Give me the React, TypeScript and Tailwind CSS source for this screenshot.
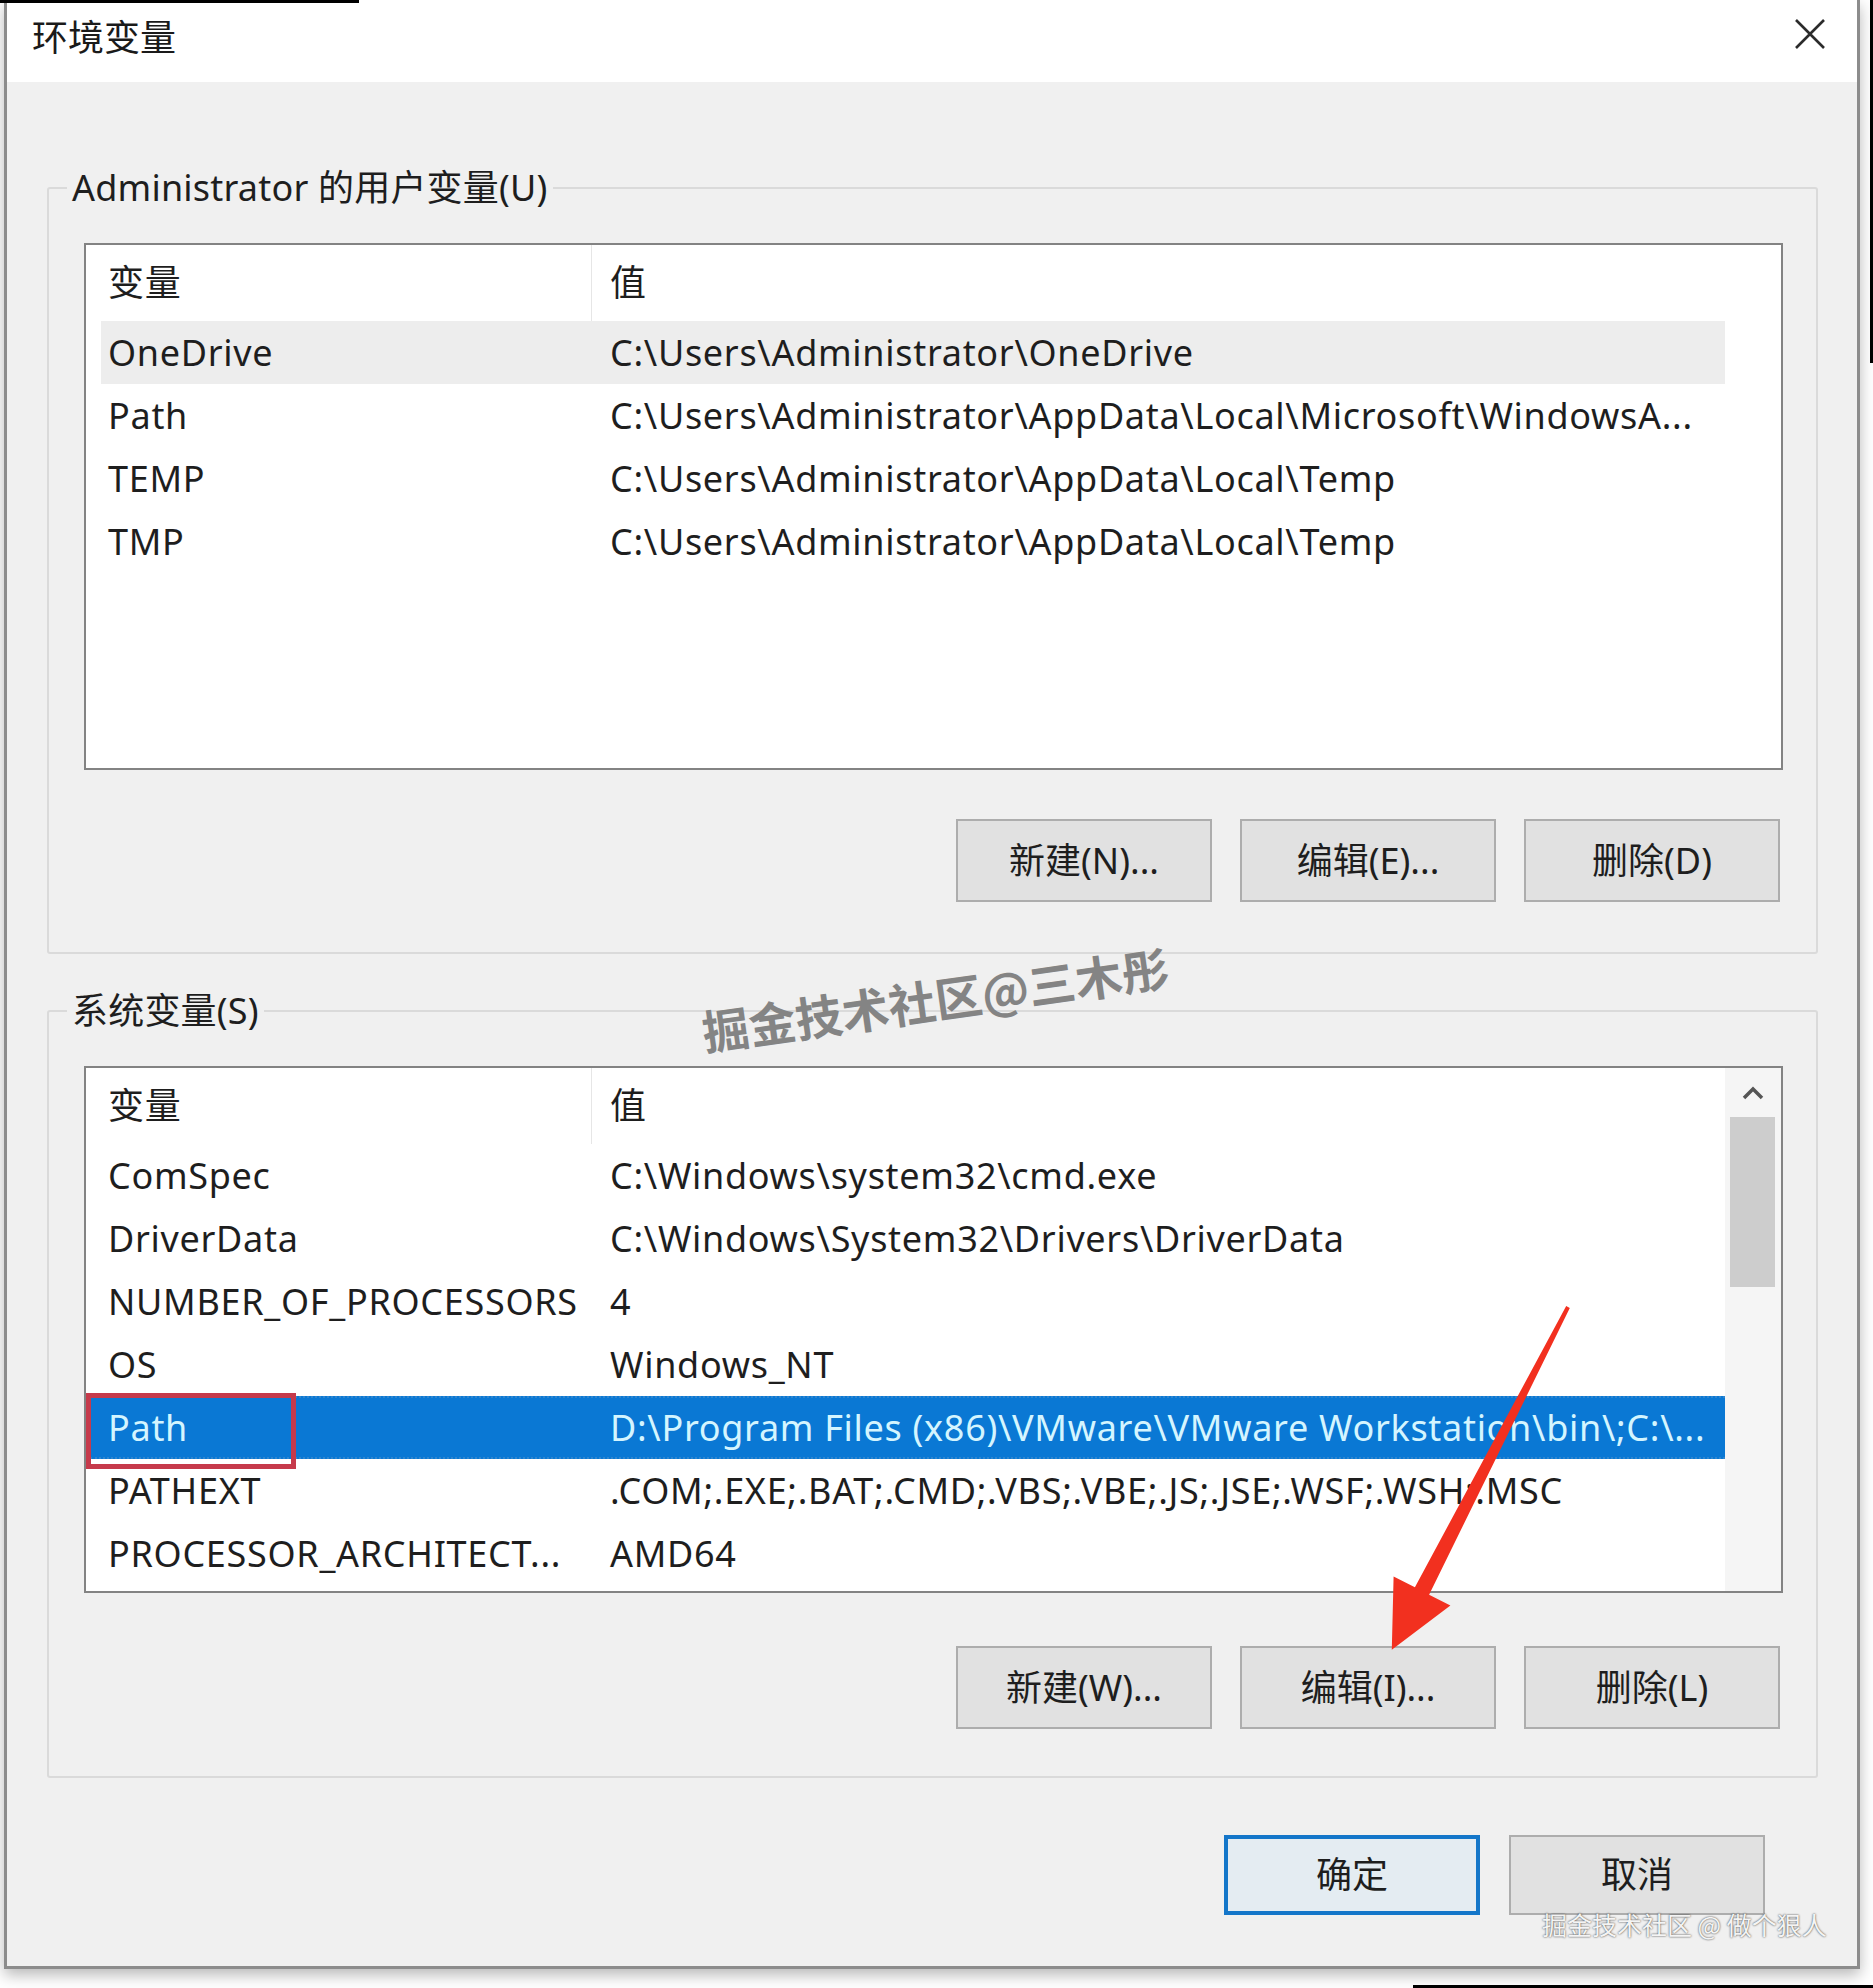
import React from "react";

type RowProps = {
  name: string;
  value: string;
  selected?: boolean;
  hover?: boolean;
  boxed?: boolean;
};

function Row({ name, value, selected, hover, boxed }: RowProps) {
  const bg = selected
    ? "bg-[#0a78d4] text-[#d4f5ff] border-y-2 border-dotted border-[#2f86cf]"
    : hover
    ? "ml-[11px] bg-[#ededed] text-[#1e1e1e]"
    : "text-[#1e1e1e]";
  return (
    <div className={`relative flex h-[63px] items-center ${bg}`}>
      <div
        className={`shrink-0 overflow-hidden whitespace-nowrap ${
          hover ? "w-[490px] pl-[7px]" : "w-[501px] pl-[18px]"
        }`}
      >
        {name}
      </div>
      <div className="flex-1 overflow-hidden whitespace-nowrap pl-[19px]">{value}</div>
      {boxed && (
        <div className="absolute left-[-4px] top-[-5px] h-[76px] w-[210px] border-[5px] border-[#c63a4b]" />
      )}
    </div>
  );
}

function ListBox({ children, scroll }: { children: React.ReactNode; scroll?: boolean }) {
  return (
    <div className="flex h-[527px] border-2 border-[#838383] bg-white">
      <div className="w-[1639px] shrink-0 pl-[4px]">
        <div className="flex h-[76px] items-stretch text-[#1e1e1e]">
          <div className="flex w-[501px] shrink-0 items-center pl-[18px]">变量</div>
          <div className="flex flex-1 items-center border-l border-[#e6e6e6] pl-[18px]">值</div>
        </div>
        {children}
      </div>
      {scroll ? (
        <div className="flex flex-1 flex-col bg-[#f5f5f5]">
          <div className="flex h-[49px] items-center justify-center">
            <svg width="22" height="14" viewBox="0 0 22 14">
              <path d="M2 12 L11 3 L20 12" fill="none" stroke="#555" strokeWidth="3.5" />
            </svg>
          </div>
          <div className="ml-[5px] h-[170px] w-[45px] bg-[#cdcdcd]" />
        </div>
      ) : (
        <div className="flex-1" />
      )}
    </div>
  );
}

function Btn({ children, primary, h = "h-[83px]" }: { children: React.ReactNode; primary?: boolean; h?: string }) {
  return (
    <div
      className={`flex w-[256px] items-center justify-center leading-none text-[#1e1e1e] ${h} ${
        primary ? "border-[4px] border-[#1476c9] bg-[#e4ecf2]" : "border-2 border-[#adadad] bg-[#e1e1e1]"
      }`}
    >
      {children}
    </div>
  );
}

export default function App() {
  return (
    <div className="relative h-[1988px] w-[1873px] overflow-hidden bg-white font-['Noto_Sans','Noto_Sans_CJK_SC',sans-serif] text-[36px] tracking-[0.7px]">
      <div className="ml-[4px] flex h-[1969px] w-[1856px] flex-col border-x-[3px] border-b-[3px] border-[#8c8c8c] bg-[#f0f0f0] shadow-[0_6px_14px_rgba(0,0,0,0.28)]">
        {/* title bar */}
        <div className="flex h-[82px] shrink-0 items-start justify-between bg-white pl-[25px] pr-[31px]">
          <div className="pt-[16px] leading-[44px] tracking-normal text-[#1a1a1a]">环境变量</div>
          <svg className="mt-[18px]" width="32" height="32" viewBox="0 0 32 32">
            <path d="M2 2 L30 30 M30 2 L2 30" stroke="#2b2b2b" strokeWidth="2.6" />
          </svg>
        </div>

        {/* body */}
        <div className="flex flex-col pl-[40px] pr-[39px] pt-[84px]">
          <fieldset className="rounded-[3px] border-2 border-[#dadada]">
            <legend className="ml-[18px] px-[5px] leading-[44px] tracking-[0.2px] text-[#1e1e1e]">
              Administrator 的用户变量(U)
            </legend>
            <div className="pb-[50px] pl-[35px] pr-[33px] pt-[33px]">
              <ListBox>
                <Row name="OneDrive" value="C:\Users\Administrator\OneDrive" hover />
                <Row name="Path" value="C:\Users\Administrator\AppData\Local\Microsoft\WindowsA..." />
                <Row name="TEMP" value="C:\Users\Administrator\AppData\Local\Temp" />
                <Row name="TMP" value="C:\Users\Administrator\AppData\Local\Temp" />
              </ListBox>
              <div className="mr-[3px] mt-[49px] flex justify-end gap-[28px] tracking-normal">
                <Btn>新建(N)...</Btn>
                <Btn>编辑(E)...</Btn>
                <Btn>删除(D)</Btn>
              </div>
            </div>
          </fieldset>

          <fieldset className="mt-[35px] rounded-[3px] border-2 border-[#dadada]">
            <legend className="ml-[18px] px-[5px] leading-[44px] tracking-[0.2px] text-[#1e1e1e]">系统变量(S)</legend>
            <div className="pb-[47px] pl-[35px] pr-[33px] pt-[33px]">
              <ListBox scroll>
                <Row name="ComSpec" value="C:\Windows\system32\cmd.exe" />
                <Row name="DriverData" value="C:\Windows\System32\Drivers\DriverData" />
                <Row name="NUMBER_OF_PROCESSORS" value="4" />
                <Row name="OS" value="Windows_NT" />
                <Row
                  name="Path"
                  value="D:\Program Files (x86)\VMware\VMware Workstation\bin\;C:\..."
                  selected
                  boxed
                />
                <Row name="PATHEXT" value=".COM;.EXE;.BAT;.CMD;.VBS;.VBE;.JS;.JSE;.WSF;.WSH;.MSC" />
                <Row name="PROCESSOR_ARCHITECT..." value="AMD64" />
              </ListBox>
              <div className="mr-[3px] mt-[53px] flex justify-end gap-[28px] tracking-normal">
                <Btn>新建(W)...</Btn>
                <Btn>编辑(I)...</Btn>
                <Btn>删除(L)</Btn>
              </div>
            </div>
          </fieldset>

          <div className="mr-[53px] mt-[57px] flex justify-end gap-[29px] tracking-normal">
            <Btn primary h="h-[80px]">确定</Btn>
            <Btn h="h-[80px]">取消</Btn>
          </div>
        </div>
      </div>

      {/* watermark center */}
      <div className="pointer-events-none absolute left-[935px] top-[998px] -translate-x-1/2 -translate-y-1/2 -rotate-[8deg] whitespace-nowrap font-['Noto_Sans_CJK_SC',sans-serif] text-[47px] font-bold leading-none tracking-normal text-[#848484]">
        掘金技术社区@三木彤
      </div>

      {/* watermark bottom */}
      <div className="pointer-events-none absolute left-[1542px] top-[1908px] whitespace-nowrap font-['Noto_Sans_CJK_SC',sans-serif] text-[25px] leading-[32px] tracking-normal text-[#f4f4f4] [text-shadow:0_0_2px_rgba(0,0,0,0.85)]">
        掘金技术社区 @ 做个狠人
      </div>

      {/* red arrow */}
      <svg className="pointer-events-none absolute left-0 top-0" width="1873" height="1988" viewBox="0 0 1873 1988">
        <polygon
          points="1566.2,1306 1569.8,1308 1429.1,1594.7 1450.4,1605.6 1391.8,1649.7 1393.6,1576.4 1414.9,1587.3"
          fill="#f2301f"
        />
      </svg>

      {/* screenshot edge artifacts */}
      <div className="absolute left-0 top-0 h-[3px] w-[359px] bg-black" />
      <div className="absolute right-0 top-0 h-[363px] w-[3px] bg-black" />
      <div className="absolute bottom-0 right-0 h-[3px] w-[460px] bg-black" />
    </div>
  );
}
